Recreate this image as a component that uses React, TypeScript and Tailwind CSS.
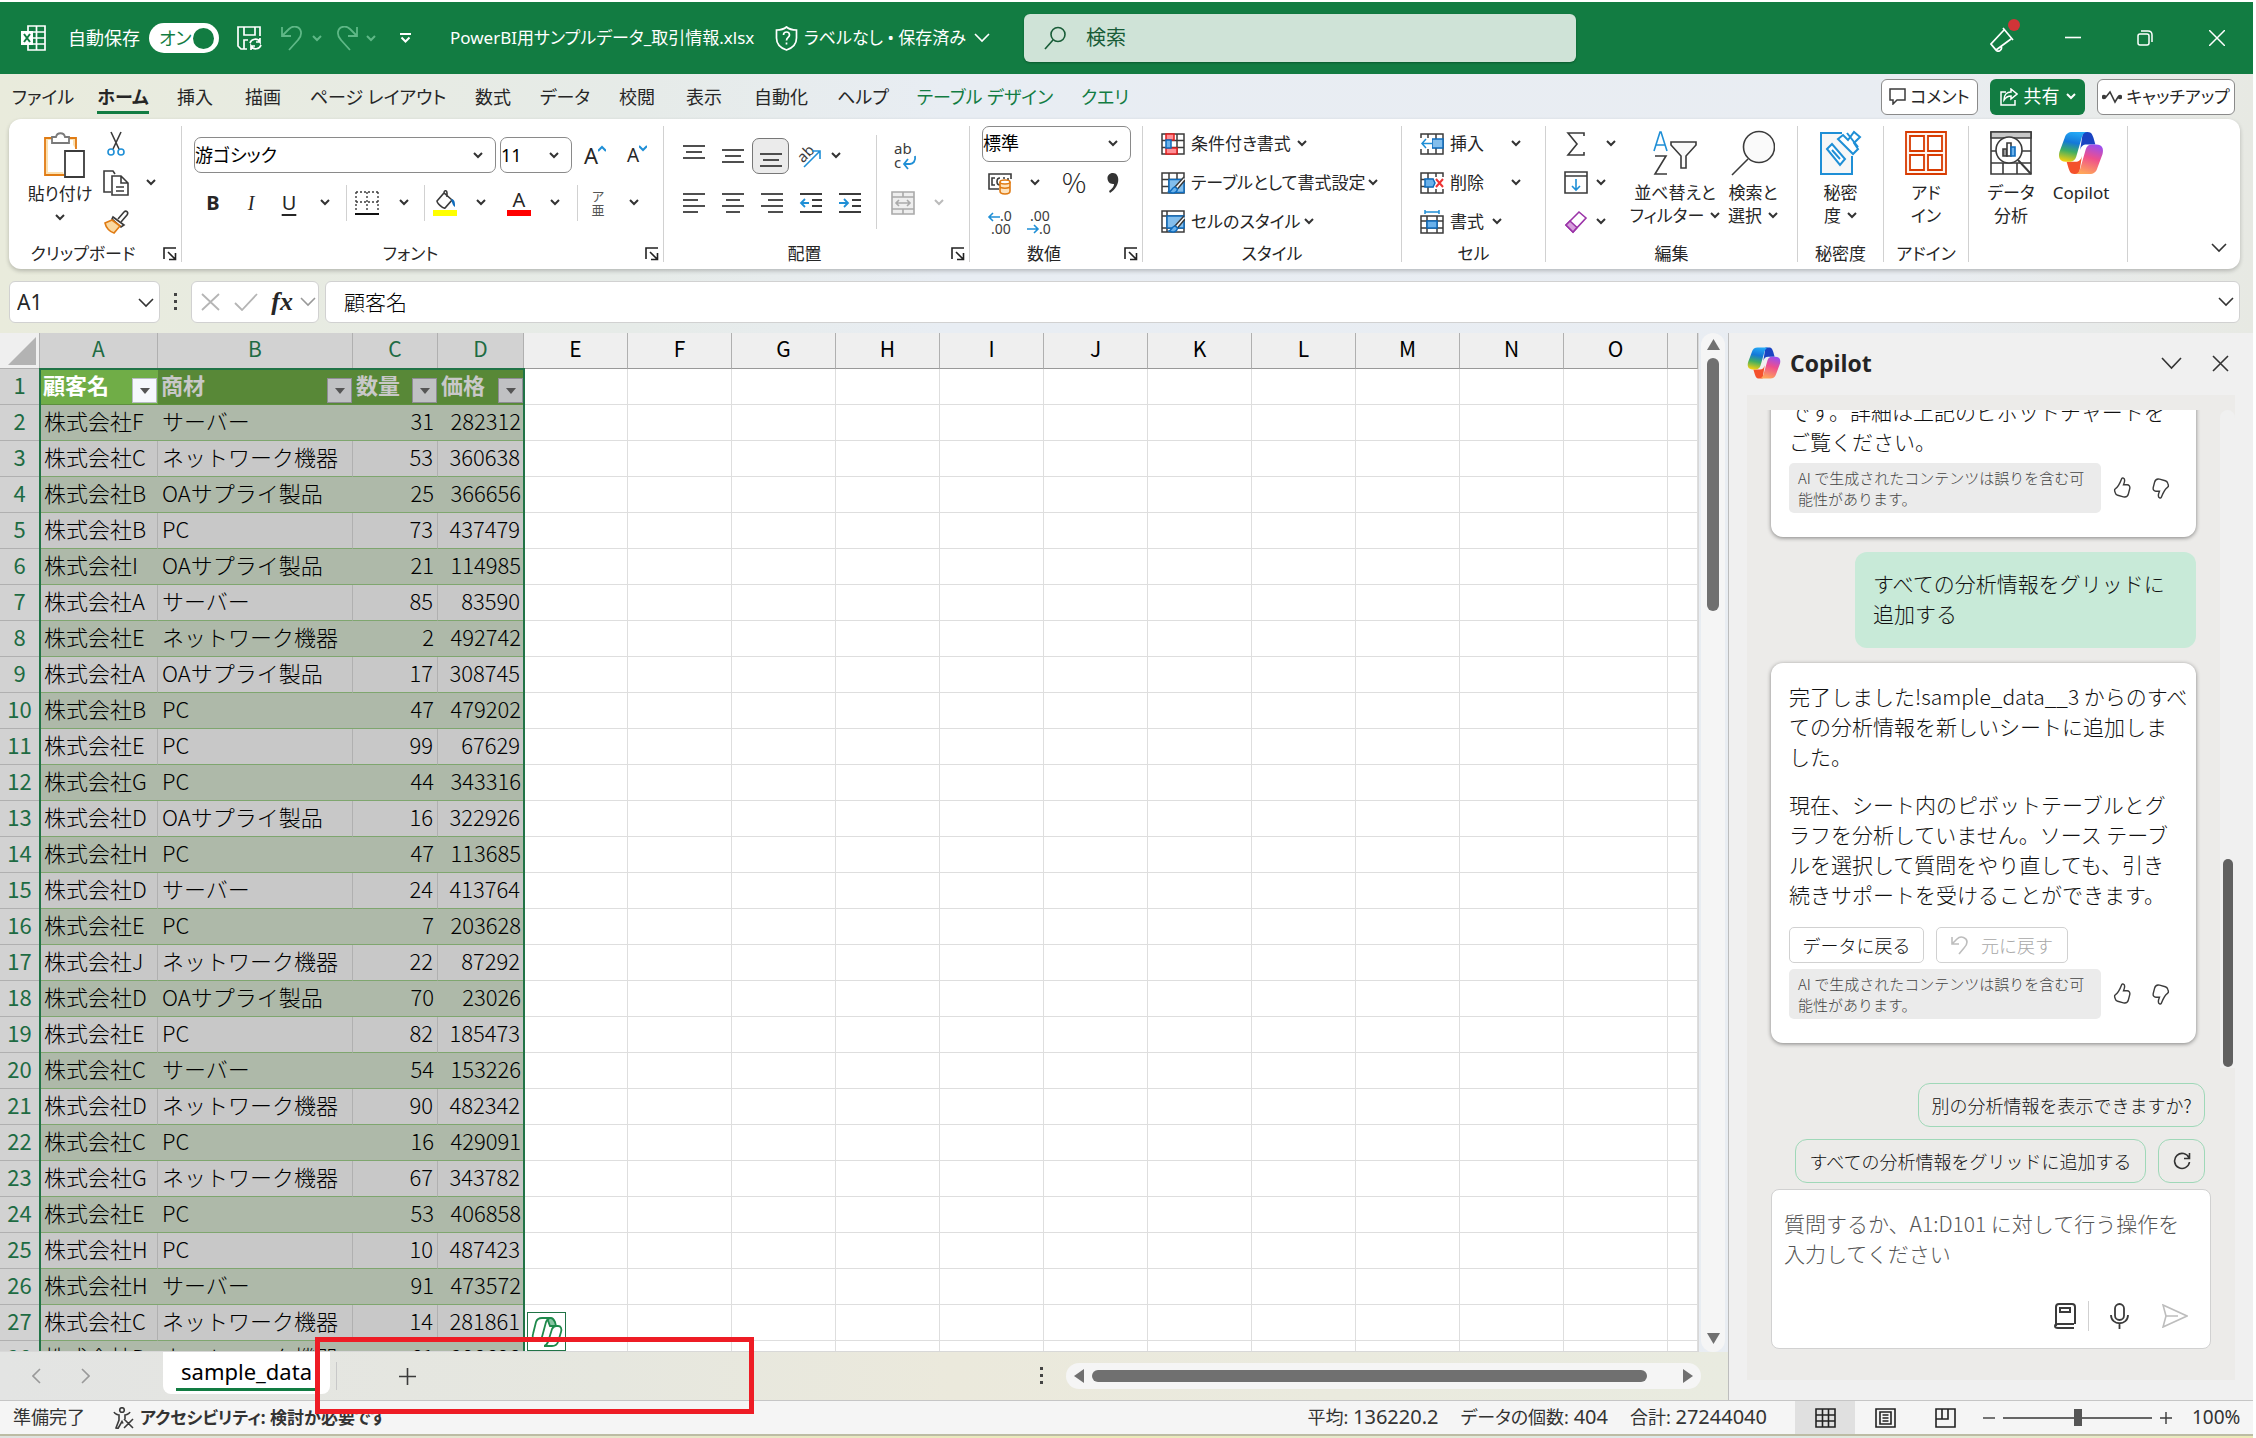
import { useState } from "react";
import type { ReactNode } from "react";

const INK = "#3b3b3b";
const BLUE = "#1f8fd6";

const TABS = [
  { label: "ファイル", width: "w-[86px]" },
  { label: "ホーム", width: "w-[74px]" },
  { label: "挿入", width: "w-[70px]" },
  { label: "描画", width: "w-[66px]" },
  { label: "ページ レイアウト", width: "w-[164px]" },
  { label: "数式", width: "w-[66px]" },
  { label: "データ", width: "w-[78px]" },
  { label: "校閲", width: "w-[66px]" },
  { label: "表示", width: "w-[68px]" },
  { label: "自動化", width: "w-[86px]" },
  { label: "ヘルプ", width: "w-[78px]" },
  { label: "テーブル デザイン", width: "w-[166px]", accent: true },
  { label: "クエリ", width: "w-[74px]", accent: true },
];

const COLUMNS = ["E", "F", "G", "H", "I", "J", "K", "L", "M", "N", "O", ""];

const ROWS: [string, string, number, number][] = [
  ["株式会社F", "サーバー", 31, 282312],
  ["株式会社C", "ネットワーク機器", 53, 360638],
  ["株式会社B", "OAサプライ製品", 25, 366656],
  ["株式会社B", "PC", 73, 437479],
  ["株式会社I", "OAサプライ製品", 21, 114985],
  ["株式会社A", "サーバー", 85, 83590],
  ["株式会社E", "ネットワーク機器", 2, 492742],
  ["株式会社A", "OAサプライ製品", 17, 308745],
  ["株式会社B", "PC", 47, 479202],
  ["株式会社E", "PC", 99, 67629],
  ["株式会社G", "PC", 44, 343316],
  ["株式会社D", "OAサプライ製品", 16, 322926],
  ["株式会社H", "PC", 47, 113685],
  ["株式会社D", "サーバー", 24, 413764],
  ["株式会社E", "PC", 7, 203628],
  ["株式会社J", "ネットワーク機器", 22, 87292],
  ["株式会社D", "OAサプライ製品", 70, 23026],
  ["株式会社E", "PC", 82, 185473],
  ["株式会社C", "サーバー", 54, 153226],
  ["株式会社D", "ネットワーク機器", 90, 482342],
  ["株式会社C", "PC", 16, 429091],
  ["株式会社G", "ネットワーク機器", 67, 343782],
  ["株式会社E", "PC", 53, 406858],
  ["株式会社H", "PC", 10, 487423],
  ["株式会社H", "サーバー", 91, 473572],
  ["株式会社C", "ネットワーク機器", 14, 281861],
  ["株式会社D", "ネットワーク機器", 61, 298698],
];

function Svg({
  w = 24,
  h = 24,
  box,
  children,
  stroke = INK,
  sw = 1.6,
}: {
  w?: number;
  h?: number;
  box?: string;
  children: ReactNode;
  stroke?: string;
  sw?: number;
}) {
  return (
    <svg
      width={w}
      height={h}
      viewBox={box ?? `0 0 ${w} ${h}`}
      fill="none"
      stroke={stroke}
      strokeWidth={sw}
      className="shrink-0"
      aria-hidden="true"
    >
      {children}
    </svg>
  );
}

function Chevron({ color = "#333" }: { color?: string }) {
  return (
    <Svg w={10} h={7} stroke={color} sw={2}>
      <path d="M1 1l4 4 4-4" />
    </Svg>
  );
}

function WideChevron({ color = "#333" }: { color?: string }) {
  return (
    <Svg w={16} h={10} stroke={color} sw={1.6}>
      <path d="M1 1l7 7 7-7" />
    </Svg>
  );
}

function CopilotLogo({ w, h }: { w: number; h: number }) {
  return (
    <Svg w={w} h={h} box="0 0 48 48" stroke="none">
      <defs>
        <linearGradient id="cool" x1="0.5" y1="0" x2="0.3" y2="1">
          <stop offset="0" stopColor="#24a8f5" />
          <stop offset="0.35" stopColor="#1478d8" />
          <stop offset="0.65" stopColor="#3fae63" />
          <stop offset="1" stopColor="#f2cf10" />
        </linearGradient>
        <linearGradient id="warm" x1="0.7" y1="0" x2="0.4" y2="1">
          <stop offset="0" stopColor="#9a4ff0" />
          <stop offset="0.45" stopColor="#ee4f8d" />
          <stop offset="1" stopColor="#ffa65a" />
        </linearGradient>
      </defs>
      <path d="M26 2h5c4 0 5 3 6 6l2 7h-9c-4 0-6 2-7 6z" fill="#1a44c2" />
      <path d="M22 46h-5c-4 0-5-3-6-6l-2-7h9c4 0 6-2 7-6z" fill="#f4512c" />
      <path
        d="M15 2h16c-3 0-5 2-6 5l-6 21c-1 3-3 5-6 5H8c-6 0-8-4-6.500-10L7 8c1-4 4-6 8-6z"
        fill="url(#cool)"
      />
      <path
        d="M33 46H17c3 0 5-2 6-5l6-21c1-3 3-5 6-5h5c6 0 8 4 6.500 10L41 40c-1 4-4 6-8 6z"
        fill="url(#warm)"
      />
    </Svg>
  );
}

function Lines({ rows, y = 4 }: { rows: [number, number][]; y?: number }) {
  return (
    <Svg sw={1.8}>
      {rows.map(([x1, x2], i) => (
        <path key={i} d={`M${x1} ${y + i * 6}H${x2}`} />
      ))}
    </Svg>
  );
}

function GridIcon({ children }: { children?: ReactNode }) {
  return (
    <Svg sw={1.5}>
      <path d="M1 2h22v20H1zM1 8.500h22M1 15.500h22M8 2v20M16 2v20" />
      {children}
    </Svg>
  );
}

function Brush() {
  return (
    <>
      <path d="M23 6l-9 10 2.500 2L24 9" fill="#fff" />
      <path d="M14 16c-3 0-3 4-6 5 4 2 8 1 8.500-3z" fill="#6bb1ea" stroke="#0f6cbd" />
    </>
  );
}

function ThumbIcon({ down }: { down?: boolean }) {
  return (
    <button aria-label={down ? "よくない" : "よい"} className={down ? "rotate-180" : ""}>
      <Svg w={22} h={26} box="0 0 20 22" sw={1.3}>
        <path d="M9.800 2.400c.5-1 2.600-.6 2.600 1.600 0 1.500-.5 2.900-1 4.100h3.200c1.800 0 2.900 1.500 2.500 3.200l-1.300 5.100c-.6 2.200-2.500 3.200-4.500 2.700l-5.200-1.500c-1.100-.3-1.900-1.100-2.200-2.200l-.6-1.800c-.2-.8.1-1.600.8-2 2.700-1.700 3.700-4 5.700-9.200z" />
      </Svg>
    </button>
  );
}

function Tool({
  label,
  width,
  children,
}: {
  label: string;
  width: string;
  children: ReactNode;
}) {
  return (
    <button aria-label={label} className={`flex h-9 items-center justify-center ${width}`}>
      {children}
    </button>
  );
}

function Group({
  label,
  width,
  launcher,
  children,
}: {
  label: string;
  width: string;
  launcher?: boolean;
  children: ReactNode;
}) {
  return (
    <section className={`flex shrink-0 ${width}`}>
      <div className="flex min-w-0 flex-1 flex-col">
        <div className="flex h-[123px] pt-[5px]">{children}</div>
        <div className="flex h-6 items-center">
          <h2 className="flex-1 text-center">{label}</h2>
          {launcher && (
            <button aria-label={`${label}の設定`} className="w-6 pl-[6px]">
              <Svg w={14} h={14} stroke="#222" sw={1.6}>
                <path d="M1 12V1h12M5 5l7 7M12.500 6v6.500H6" />
              </Svg>
            </button>
          )}
        </div>
      </div>
      <div className="my-[7px] w-px bg-[#d1d1d1]" />
    </section>
  );
}

function BigButton({
  icon,
  lines,
  width,
  chevron,
}: {
  icon: ReactNode;
  lines: string[];
  width: string;
  chevron?: boolean;
}) {
  return (
    <button className={`flex flex-col items-center leading-[23px] whitespace-nowrap ${width}`}>
      <span className="flex h-[57px] items-center">{icon}</span>
      {lines.map((line, i) => (
        <span key={line} className="flex h-[23px] items-center gap-[6px]">
          {line}
          {chevron && i === lines.length - 1 && <Chevron />}
        </span>
      ))}
    </button>
  );
}

function RowButton({
  icon,
  label,
  gap = "gap-[6px]",
}: {
  icon: ReactNode;
  label: string;
  gap?: string;
}) {
  return (
    <button className="flex h-[39px] items-center gap-[6px] whitespace-nowrap">
      {icon}
      <span className={`flex items-center ${gap}`}>
        {label}
        <Chevron />
      </span>
    </button>
  );
}

function Select({ label, value, width }: { label: string; value: string; width: string }) {
  return (
    <div className={`relative flex h-9 items-center ${width}`}>
      <select
        aria-label={label}
        className="h-9 w-full appearance-none rounded-[7px] border border-[#8a8a8a] bg-white text-[18px] text-black"
      >
        <option>{value}</option>
      </select>
      <span className="pointer-events-none absolute right-[13px]">
        <Chevron />
      </span>
    </div>
  );
}

function TitleBar() {
  const [autosave, setAutosave] = useState(true);
  return (
    <header className="flex h-[72px] items-center bg-[#127c42] pl-[21px] text-[18px] text-white">
      <Svg w={25} h={26} stroke="#fff" sw={1.7}>
        <path d="M7 6V1h17v24H7v-5M7 7h17M12 13h12M7 19h17M15.500 1v24" />
        <path d="M0 6h12v14H0z" fill="#fff" stroke="none" />
        <path d="M3 9l6 8M9 9l-6 8" stroke="#127c42" strokeWidth={2} />
      </Svg>
      <label className="ml-[22px] flex items-center gap-[9px]">
        自動保存
        <input
          type="checkbox"
          checked={autosave}
          onChange={(e) => setAutosave(e.target.checked)}
          className="sr-only"
        />
        <span className="flex h-[30px] w-[70px] items-center justify-between rounded-full bg-white pr-[5px] pl-[10px] text-[#127c42]">
          オン
          <span className="h-[21px] w-[21px] rounded-full bg-[#127c42]" />
        </span>
      </label>
      <button aria-label="上書き保存" className="ml-[18px]">
        <Svg w={25} h={25} stroke="#fff" sw={1.7}>
          <path d="M10 23H4l-3-3V1h22v9M7 1v8h11V1M7 23v-9h4" />
          <path d="M13 17a5.500 5.500 0 0 1 10-1v-4M24 19a5.500 5.500 0 0 1-10 1v4M23 16h-4M14 20h4" />
        </Svg>
      </button>
      <button aria-label="元に戻す" className="ml-[19px] flex items-center gap-2">
        <Svg w={23} h={25} stroke="#5fb887" sw={1.8}>
          <path d="M1 1v9h9M1 10l7-7c4-4 11-3 12 3 .5 4-1 6-3 8L8 24" />
        </Svg>
        <Chevron color="#5fb887" />
      </button>
      <button aria-label="やり直し" className="ml-[13px] flex items-center gap-2">
        <Svg w={23} h={25} stroke="#5fb887" sw={1.8}>
          <path d="M22 1v9h-9M22 10l-7-7C11-1 4 0 3 6c-.5 4 1 6 3 8l9 10" />
        </Svg>
        <Chevron color="#5fb887" />
      </button>
      <button aria-label="クイック アクセス ツール バーのユーザー設定" className="ml-6">
        <Svg w={11} h={10} stroke="#fff" sw={2}>
          <path d="M0 1h11M1.500 4.500l4 4 4-4" />
        </Svg>
      </button>
      <div className="ml-[39px] flex w-[574px] items-center text-[17px] whitespace-nowrap">
        <span className="w-[325px]">PowerBI用サンプルデータ_取引情報.xlsx</span>
        <Svg w={23} h={25} stroke="#fff" sw={1.7}>
          <path d="M11.500 1c3 2.500 6 3 10 3v8c0 6-4 10-10 12-6-2-10-6-10-12V4c4 0 7-.5 10-3z" />
          <path d="M8.500 9c0-4 6-4 6 0 0 2.500-3 2.500-3 5.500M11.500 16.500v2" />
        </Svg>
        <span className="ml-[6px]">ラベルなし • 保存済み</span>
        <span className="ml-2">
          <WideChevron color="#fff" />
        </span>
      </div>
      <label className="flex h-12 w-[552px] items-center gap-5 rounded-md bg-[#cfe3d7] pl-5 shadow-[0_1px_2px_#0a5a2e]">
        <Svg w={22} h={24} stroke="#185c37" sw={1.6}>
          <circle cx="14" cy="8.500" r="7" />
          <path d="M9 14L1 23" />
        </Svg>
        <input
          type="search"
          placeholder="検索"
          aria-label="検索"
          className="flex-1 bg-transparent text-[20px] placeholder:text-[#185c37]"
        />
      </label>
      <div className="ml-auto flex items-center">
        <button aria-label="新機能" className="relative w-[47px]">
          <Svg w={26} h={28} stroke="#fff" sw={1.7}>
            <path d="M14 6L1 20l5 6L21 15M6 26c2 3 7 0 5-4M13 4l10 12" />
          </Svg>
          <span className="absolute -top-[5px] left-[18px] h-3 w-3 rounded-full bg-[#d13438]" />
        </button>
        <button aria-label="最小化" className="flex w-[72px] justify-center">
          <Svg w={16} h={16} stroke="#fff">
            <path d="M0 7.500h16" />
          </Svg>
        </button>
        <button aria-label="元のサイズに戻す" className="flex w-[72px] justify-center">
          <Svg w={16} h={16} stroke="#fff" sw={1.5}>
            <rect x="1" y="4" width="11" height="11" rx="2" />
            <path d="M4 1h7c2.500 0 4 1.500 4 4v7" />
          </Svg>
        </button>
        <button aria-label="閉じる" className="flex w-[72px] justify-center">
          <Svg w={16} h={16} stroke="#fff" sw={1.5}>
            <path d="M0 0l16 16M16 0L0 16" />
          </Svg>
        </button>
      </div>
    </header>
  );
}

function TabRow() {
  return (
    <nav className="flex h-[45px] items-center text-[18px] whitespace-nowrap text-[#262626]">
      {TABS.map((t) => (
        <button
          key={t.label}
          className={`flex h-9 justify-center ${t.width} ${t.accent ? "text-[#127c42]" : ""}`}
        >
          <span
            className={
              t.label === "ホーム"
                ? "h-[35px] border-b-[3px] border-[#127c42] pt-[6px] leading-6 font-bold"
                : "pt-[6px] leading-6"
            }
          >
            {t.label}
          </span>
        </button>
      ))}
      <div className="mr-[18px] ml-auto flex gap-3">
        <button className="flex h-9 w-[97px] items-center justify-center gap-1 rounded-[6px] border border-[#8a8a8a] bg-white text-[17px]">
          <Svg w={17} h={17} sw={1.5}>
            <path d="M1 1h15v11H8l-4 4v-4H1z" />
          </Svg>
          コメント
        </button>
        <button className="flex h-9 w-[95px] items-center justify-center gap-[6px] rounded-[6px] bg-[#127c42] text-white">
          <Svg w={18} h={18} stroke="#fff" sw={1.5}>
            <path d="M6 4H1v13h14v-5M11 1l6 5-6 5V8c-3 0-5 1-7 4 0-5 3-8 7-8z" />
          </Svg>
          共有
          <Chevron color="#fff" />
        </button>
        <button className="flex h-9 w-[138px] items-center justify-center gap-1 rounded-[6px] border border-[#8a8a8a] bg-white text-[17px]">
          <Svg w={20} h={14} sw={1.6}>
            <path d="M2 7h2l4-5 5 10 3-5h2" />
            <circle cx="2" cy="7" r="1.500" fill={INK} />
            <circle cx="18" cy="7" r="1.500" fill={INK} />
          </Svg>
          キャッチアップ
        </button>
      </div>
    </nav>
  );
}

function Ribbon() {
  return (
    <div className="mr-[13px] ml-[9px] flex h-[150px] rounded-xl bg-white text-[17px] text-[#262626] shadow-[0_2px_4px_rgba(0,0,0,0.22)]">
      <Group label="クリップボード" width="w-[173px]" launcher>
        <button className="ml-[18px] flex w-[66px] flex-col items-center pt-2 leading-6">
          <span className="pl-[10px]">
            <Svg w={42} h={46} sw={1.8}>
              <path d="M8 6H1v37h19M24 6h8v11" stroke="#e07b13" fill="#fbe0b0" />
              <path d="M4 8h25v10H20v22H4z" fill="#fff" stroke="none" />
              <path d="M8 11V5h4c1-5 8-5 9 0h4v6z" fill="#fff" stroke="#7a7a7a" />
              <path d="M21 19h19v26H21z" fill="#fff" />
            </Svg>
          </span>
          <span className="mt-1 mb-2">貼り付け</span>
          <Chevron />
        </button>
        <div className="flex w-[46px] flex-col">
          <Tool label="切り取り" width="mt-[2px] w-[46px]">
            <Svg w={18} h={26}>
              <path d="M4 1l8 17M14 1L6 18" />
              <g stroke={BLUE}>
                <circle cx="4" cy="21" r="3" />
                <circle cx="14" cy="21" r="3" />
              </g>
            </Svg>
          </Tool>
          <Tool label="コピー" width="mt-[3px] w-[46px]">
            <Svg w={26} h={26}>
              <path d="M8 22H1V1h9l2 3M9 6h9l7 7v12H9zM18 6v7h7M13 17h8M13 21h8" />
            </Svg>
          </Tool>
          <Tool label="書式のコピー" width="mt-[3px] w-[46px]">
            <Svg w={25} h={24}>
              <path d="M14 9l6-7c2-2 5 0 3 3l-6 7" />
              <path d="M9 7l11 8-3 2L8 9z" fill="#fff" />
              <path d="M8 10L1 13c1 5 5 9 9 10l6-7z" fill="#fbd9a0" stroke="#e07b13" />
            </Svg>
          </Tool>
        </div>
        <button aria-label="コピーのオプション" className="flex h-[117px] w-6 items-center justify-center">
          <Chevron />
        </button>
      </Group>

      <Group label="フォント" width="w-[482px]" launcher>
        <div className="flex flex-col pt-2 pl-3">
          <div className="flex h-[47px] items-start gap-1 pt-[5px]">
            <Select label="フォント名" value="游ゴシック" width="w-[302px]" />
            <Select label="フォント サイズ" value="11" width="w-[72px]" />
            <Tool label="拡大" width="w-[38px]">
              <span className="text-[22px]">A</span>
              <Svg w={8} h={20} stroke={BLUE} sw={2}>
                <path d="M0 6l4-4 4 4" />
              </Svg>
            </Tool>
            <Tool label="縮小" width="w-[38px]">
              <span className="text-[19px]">A</span>
              <Svg w={8} h={20} stroke={BLUE} sw={2}>
                <path d="M0 1l4 4 4-4" />
              </Svg>
            </Tool>
          </div>
          <div className="flex h-[47px] items-center text-[20px]">
            <Tool label="太字" width="w-[38px] font-bold">
              B
            </Tool>
            <Tool label="斜体" width="w-[38px] font-['Liberation_Serif',serif] italic">
              I
            </Tool>
            <Tool label="下線" width="w-[38px] underline underline-offset-4">
              U
            </Tool>
            <Tool label="下線の種類" width="w-[34px]">
              <Chevron />
            </Tool>
            <i className="ml-1 h-9 w-px bg-[#d1d1d1]" />
            <Tool label="罫線" width="w-[40px]">
              <Svg w={24} h={24}>
                <path d="M1 1h22M1 1v20M23 1v20M12 1v20M1 11h22" strokeDasharray="2 2" strokeWidth={1.4} />
                <path d="M0 23h24" stroke="#111" strokeWidth={2} />
              </Svg>
            </Tool>
            <Tool label="罫線の種類" width="w-[34px]">
              <Chevron />
            </Tool>
            <i className="ml-[3px] h-9 w-px bg-[#d1d1d1]" />
            <Tool label="塗りつぶしの色" width="w-[40px]">
              <Svg w={24} h={26}>
                <path d="M4 11l7-8 8 7-7 8c-2 1-8-5-8-7zM11 3c0-3 3-3 3 0v4" />
                <path d="M18 9c4 0 4 4 4 8-2-1-3-4-4-8z" fill="#0f6cbd" stroke="none" />
                <path d="M0 20h24v6H0z" fill="#ffff00" stroke="none" />
              </Svg>
            </Tool>
            <Tool label="塗りつぶしの色を選択" width="w-[32px]">
              <Chevron />
            </Tool>
            <Tool label="フォントの色" width="w-[44px] flex-col">
              <span className="text-[20px] leading-5">A</span>
              <span className="h-[6px] w-6 bg-[#ff0000]" />
            </Tool>
            <Tool label="フォントの色を選択" width="w-[28px]">
              <Chevron />
            </Tool>
            <i className="ml-2 h-9 w-px bg-[#d1d1d1]" />
            <Tool
              label="ふりがな"
              width="w-[40px] flex-col font-['Noto_Sans_CJK_JP',sans-serif] text-[13px] leading-[14px] text-[#555]"
            >
              <span>ア</span>
              <span>亜</span>
            </Tool>
            <Tool label="ふりがなの設定" width="w-[32px]">
              <Chevron />
            </Tool>
          </div>
        </div>
      </Group>

      <Group label="配置" width="w-[306px]" launcher>
        <div className="flex flex-col pt-2 pl-[10px]">
          <div className="flex h-[47px] items-center">
            <Tool label="上揃え" width="w-[39px]">
              <Lines rows={[[1, 23], [4, 20], [1, 23]]} y={2} />
            </Tool>
            <Tool label="上下中央揃え" width="w-[39px]">
              <Lines rows={[[1, 23], [4, 20], [1, 23]]} y={6} />
            </Tool>
            <Tool label="下揃え" width="w-[37px] rounded-[7px] border border-[#777] bg-[#ebebeb]">
              <Lines rows={[[1, 23], [4, 20], [1, 23]]} y={10} />
            </Tool>
            <Tool label="方向" width="w-[39px]">
              <Svg w={26} h={26}>
                <text
                  x="1"
                  y="18"
                  transform="rotate(-45 7 12)"
                  fontSize="15"
                  fill={INK}
                  stroke="none"
                >
                  ab
                </text>
                <path d="M8 24L24 8M16 8h8v8" stroke={BLUE} />
              </Svg>
            </Tool>
            <Tool label="方向の種類" width="w-4">
              <Chevron />
            </Tool>
          </div>
          <div className="flex h-[47px] items-center">
            <Tool label="左揃え" width="w-[39px]">
              <Lines rows={[[1, 23], [1, 16], [1, 23], [1, 16]]} y={3} />
            </Tool>
            <Tool label="中央揃え" width="w-[39px]">
              <Lines rows={[[1, 23], [5, 19], [1, 23], [5, 19]]} y={3} />
            </Tool>
            <Tool label="右揃え" width="w-[39px]">
              <Lines rows={[[1, 23], [8, 23], [1, 23], [8, 23]]} y={3} />
            </Tool>
            <Tool label="インデントを減らす" width="w-[39px]">
              <Svg sw={1.8}>
                <path d="M1 3h22M13 9h10M13 15h10M1 21h22" />
                <path d="M10 12H2M6 8l-4 4 4 4" stroke={BLUE} />
              </Svg>
            </Tool>
            <Tool label="インデントを増やす" width="w-[39px]">
              <Svg sw={1.8}>
                <path d="M1 3h22M14 9h9M14 15h9M1 21h22" />
                <path d="M1 12h8M6 8l4 4-4 4" stroke={BLUE} />
              </Svg>
            </Tool>
          </div>
        </div>
        <i className="mt-[11px] ml-[7px] h-[94px] w-px bg-[#d1d1d1]" />
        <div className="flex flex-col pt-2">
          <div className="flex h-[47px] items-center">
            <Tool label="折り返して全体を表示する" width="w-[56px]">
              <Svg w={24} h={28}>
                <text x="1" y="12" fontSize="15" fill={INK} stroke="none">
                  ab
                </text>
                <text x="1" y="26" fontSize="15" fill={INK} stroke="none">
                  c
                </text>
                <path d="M22 14c1 5-2 8-5 8h-6M15 17l-4 5 4 5" stroke={BLUE} strokeWidth={1.8} />
              </Svg>
            </Tool>
          </div>
          <div className="flex h-[47px] items-center">
            <Tool label="セルを結合して中央揃え" width="w-[52px]">
              <Svg stroke="#a9a9a9">
                <path d="M1 1h22v22H1z" fill="#eee" />
                <path d="M1 6h22M1 18h22M12 1v5M12 18v5M5 12h14M8 9l-3 3 3 3M16 9l3 3-3 3" />
              </Svg>
            </Tool>
            <Tool label="結合の種類" width="w-5">
              <Chevron color="#bbb" />
            </Tool>
          </div>
        </div>
      </Group>

      <Group label="数値" width="w-[173px]" launcher>
        <div className="flex flex-col pl-3">
          <div className="flex h-[39px] items-center">
            <Select label="表示形式" value="標準" width="w-[149px]" />
          </div>
          <div className="flex h-[39px] items-center">
            <Tool label="通貨表示形式" width="w-9">
              <Svg w={26} h={24}>
                <path d="M12 18H2V3h22v5M8 7H5v7h3M13 14c-4 0-4-7 0-7M16 7h2M21 7v2" />
                <path
                  d="M13 11v9c0 4 10 4 10 0v-9M13 15c0 3 10 3 10 0"
                  fill="#fde3bf"
                  stroke="#e07b13"
                />
                <ellipse cx="18" cy="11" rx="5" ry="2" fill="#fff" stroke="#e07b13" />
              </Svg>
            </Tool>
            <Tool label="通貨の種類" width="w-[34px]">
              <Chevron />
            </Tool>
            <Tool
              label="パーセント スタイル"
              width="w-[44px] font-['Noto_Sans_CJK_JP',sans-serif] text-[27px] font-light"
            >
              %
            </Tool>
            <Tool label="桁区切りスタイル" width="w-[34px]">
              <Svg w={12} h={20} stroke="none">
                <path d="M6 0c7 0 8 13-3 20l-1-2c4-3 5-5 5-7-8 1-9-11-1-11z" fill="#333" />
              </Svg>
            </Tool>
          </div>
          <div className="flex h-[39px] items-center">
            <Tool label="小数点以下の表示桁数を増やす" width="w-9">
              <Svg w={26} h={26}>
                <path d="M13 8H2M6 4L2 8l4 4" stroke={BLUE} />
                <text x="13" y="12" fontSize="14" fill={INK} stroke="none">.0</text>
                <text x="4" y="25" fontSize="14" fill={INK} stroke="none">.00</text>
              </Svg>
            </Tool>
            <Tool label="小数点以下の表示桁数を減らす" width="w-[42px]">
              <Svg w={26} h={26}>
                <text x="4" y="12" fontSize="14" fill={INK} stroke="none">.00</text>
                <text x="13" y="25" fontSize="14" fill={INK} stroke="none">.0</text>
                <path d="M1 20h11M8 16l4 4-4 4" stroke={BLUE} />
              </Svg>
            </Tool>
          </div>
        </div>
      </Group>

      <Group label="スタイル" width="w-[259px]">
        <div className="flex flex-col pl-[18px]">
          <RowButton
            label="条件付き書式"
            icon={
              <GridIcon>
                <path d="M5 2h8v6H5zM5 16h11v6H5z" fill="#ff8f95" stroke="#e02020" />
                <path d="M5 8h5v8H5z" fill="#6bb1ea" stroke="#0f6cbd" />
              </GridIcon>
            }
          />
          <RowButton
            label="テーブルとして書式設定"
            gap="gap-[3px]"
            icon={
              <GridIcon>
                <path d="M8 8.500h15v13H8z" fill="#83beec" stroke="#0f6cbd" />
                <Brush />
              </GridIcon>
            }
          />
          <RowButton
            label="セルのスタイル"
            gap="gap-[3px]"
            icon={
              <Svg sw={1.5}>
                <path d="M1 1h22v21H1zM1 6h22M6 1v21M1 18h22" />
                <path d="M6 6h17v12H6z" fill="#83beec" stroke="#0f6cbd" />
                <Brush />
              </Svg>
            }
          />
        </div>
      </Group>

      <Group label="セル" width="w-[144px]">
        <div className="flex flex-col pl-[18px]">
          <RowButton
            label="挿入"
            gap="gap-[27px]"
            icon={
              <GridIcon>
                <path d="M12 7h11v9H12z" fill="#83beec" stroke="#0f6cbd" />
                <path d="M0 6h12v11H0z" fill="#fff" stroke="none" />
                <path d="M12 11.500H2M6 7l-4 4.500L6 16" stroke={BLUE} />
              </GridIcon>
            }
          />
          <RowButton
            label="削除"
            gap="gap-[27px]"
            icon={
              <GridIcon>
                <path d="M14 6h10v12H14z" fill="#fff" stroke="none" />
                <path d="M5 8h8l2 4-2 4H5z" fill="#6bb1ea" stroke="#0f6cbd" />
                <path d="M16 8l7 8M23 8l-7 8" stroke="#e33" strokeWidth={2} />
              </GridIcon>
            }
          />
          <RowButton
            label="書式"
            gap="gap-2"
            icon={
              <Svg sw={1.5}>
                <path d="M1 6h22v17H1zM1 11h22M1 18h22M7 6v17M17 6v17" />
                <path d="M7 11h10v7H7z" fill="#6bb1ea" stroke="#0f6cbd" />
                <path d="M5 2h14M5 0v4M19 0v4" stroke={BLUE} />
              </Svg>
            }
          />
        </div>
      </Group>

      <Group label="編集" width="w-[252px]">
        <div className="flex w-[86px] shrink-0 flex-col pl-[18px]">
          <div className="flex h-[39px] items-center gap-[18px]">
            <Svg>
              <path d="M20 4V1H4l9 11L4 23h16v-3" />
            </Svg>
            <Chevron />
          </div>
          <div className="flex h-[39px] items-center gap-2">
            <Svg>
              <path d="M1 1h22v21H1zM1 5h22" />
              <path d="M12 8v11M8 15l4 4 4-4" stroke={BLUE} />
            </Svg>
            <Chevron />
          </div>
          <div className="flex h-[39px] items-center gap-2">
            <Svg stroke="#9b34a8">
              <path d="M2 15l13-13 7 6L9 22z" fill="#fff" />
              <path d="M2 15l4-4 7 6.500L9 22z" fill="#d6a0dc" />
            </Svg>
            <Chevron />
          </div>
        </div>
        <BigButton
          width="w-[86px]"
          lines={["並べ替えと", "フィルター"]}
          chevron
          icon={
            <Svg w={44} h={44}>
              <path d="M1 20L7 1h1l6 19M3 14h9" stroke={BLUE} />
              <path d="M2 25h11L2 43h12" />
              <path d="M18 11h25v3L33 25v12h-5V25L18 14z" fill="#fafafa" />
            </Svg>
          }
        />
        <BigButton
          width="w-[70px]"
          lines={["検索と", "選択"]}
          chevron
          icon={
            <Svg w={44} h={46}>
              <circle cx="28" cy="17" r="15.500" fill="#fafafa" />
              <path d="M17 29L1 45" />
            </Svg>
          }
        />
      </Group>

      <Group label="秘密度" width="w-[86px]">
        <BigButton
          width="w-full"
          lines={["秘密", "度"]}
          chevron
          icon={
            <Svg w={42} h={46} stroke={BLUE} sw={2}>
              <path d="M22 3H1v41h31V26" fill="#f7f7f7" />
              <path d="M7 19l5-5 13 15-5 6zM12 20l8 9" fill="#fff" />
              <path d="M18 9l5-4 5 5 6-8 6 5-6 6 4 6-5 5z" fill="#fff" />
              <path d="M27 3l11 14" />
            </Svg>
          }
        />
      </Group>
      <Group label="アドイン" width="w-[85px]">
        <BigButton
          width="w-full"
          lines={["アド", "イン"]}
          icon={
            <Svg w={42} h={44} stroke="#d83b01" sw={1.8}>
              <path d="M1 1h40v42H1z" fill="#fff5ef" />
              <path d="M5 5h14v15H5zM23 5h14v15H23zM5 24h14v15H5zM23 24h14v15H23z" fill="#fff" />
            </Svg>
          }
        />
      </Group>
      <Group label="" width="w-[159px]">
        <BigButton
          width="ml-1 w-[76px]"
          lines={["データ", "分析"]}
          icon={
            <Svg w={42} h={44}>
              <path d="M1 1h40v42H1z" />
              <path d="M1 1h40v6H1z" fill="#c8c8c8" />
              <path d="M1 20h40M1 32h40M13 32v11M27 32v11" />
              <circle cx="19" cy="19" r="13" fill="#fff" />
              <path d="M28 29l13 14" strokeWidth={2} />
              <path d="M13 18h4v7h-4z" fill="#999" />
              <path d="M17 12h4v13h-4z" fill="#fff" />
              <path d="M21 16h4v9h-4z" fill="#6bb1ea" stroke="#0f6cbd" />
            </Svg>
          }
        />
        <BigButton width="w-[64px]" lines={["Copilot"]} icon={<CopilotLogo w={46} h={46} />} />
      </Group>
      <button aria-label="リボンを折りたたむ" className="mt-auto mr-[13px] mb-4 ml-auto">
        <WideChevron />
      </button>
    </div>
  );
}

function FormulaBar() {
  return (
    <div className="mt-3 mr-[13px] mb-[10px] ml-[9px] flex h-[42px] items-stretch text-[21px] text-[#262626]">
      <label className="flex w-[151px] items-center rounded-md border border-[#d1d1d1] bg-white pt-[2px] pr-[5px] pl-[7px]">
        <input aria-label="名前ボックス" defaultValue="A1" className="w-full min-w-0 outline-none" />
        <WideChevron />
      </label>
      <div className="flex w-[31px] items-center justify-center">
        <Svg w={4} h={18} stroke="none">
          <path d="M0 0h3v3H0zM0 7h3v3H0zM0 14h3v3H0z" fill="#444" />
        </Svg>
      </div>
      <div className="flex w-[128px] items-center rounded-md border border-[#d1d1d1] bg-white pr-[2px] pl-[9px]">
        <button aria-label="キャンセル">
          <Svg w={19} h={18} stroke="#b5b5b5" sw={1.8}>
            <path d="M1 1l17 16M18 1L1 17" />
          </Svg>
        </button>
        <button aria-label="入力" className="ml-[14px]">
          <Svg w={24} h={18} stroke="#b5b5b5" sw={1.8}>
            <path d="M1 10l7 7L23 1" />
          </Svg>
        </button>
        <button
          aria-label="関数の挿入"
          className="ml-auto font-['Liberation_Serif',serif] text-[26px] leading-8 font-bold italic"
        >
          fx
        </button>
        <span className="ml-[7px]">
          <WideChevron color="#999" />
        </span>
      </div>
      <label className="ml-[6px] flex flex-1 items-center rounded-md border border-[#d1d1d1] bg-white pr-[5px] pl-[18px]">
        <input
          aria-label="数式バー"
          defaultValue="顧客名"
          className="w-full font-['Noto_Sans_CJK_JP',sans-serif] font-light text-black outline-none [font-feature-settings:normal]"
        />
        <WideChevron />
      </label>
    </div>
  );
}

function HeaderCell({ text, active }: { text: string; active?: boolean }) {
  return (
    <th
      className={`border-b border-[#5c8f3d] p-0 text-left font-bold ${
        active ? "bg-[#70ad47] text-white" : "bg-[#588837] text-[#c8c8c8]"
      }`}
    >
      <div className="flex h-[35px] items-start justify-between pr-px pl-[3px] leading-[30px]">
        {text}
        <button
          aria-label={`${text}のフィルター`}
          className={`mt-[9px] flex h-[25px] w-[25px] items-center justify-center border ${
            active ? "border-[#b8bcc4] bg-[#f6f8fc]" : "border-[#8f8c96] bg-[#c0c1c3]"
          }`}
        >
          <Svg w={10} h={6} stroke="none">
            <path d="M0 0h10L5 6z" fill="#555" />
          </Svg>
        </button>
      </div>
    </th>
  );
}

function Sheet() {
  const cell = "border-r border-b border-[#dedede] p-0";
  const rowHead =
    "border-r border-b border-[#b0b0b0] bg-[#d2d2d2] p-0 align-top font-normal text-[#1e6b43]";
  return (
    <div className="relative min-h-0 flex-1 overflow-hidden border-r border-b border-[#d8d8d8] bg-white">
      <table className="w-full table-fixed border-separate border-spacing-0 font-['Noto_Sans_CJK_JP',sans-serif] text-[22px] leading-[30px] font-light whitespace-nowrap text-black">
        <colgroup>
          <col className="w-10" />
          <col className="w-[118px]" />
          <col className="w-[195px]" />
          <col className="w-[85px]" />
          <col className="w-[86px]" />
          {COLUMNS.map((c) => (
            <col key={c} className={c ? "w-[104px]" : ""} />
          ))}
        </colgroup>
        <thead>
          <tr className="h-9 text-[21px]">
            <th className="border-r border-b border-[#b0b0b0] bg-[#efefef] p-0">
              <div className="flex justify-end pr-[3px]">
                <Svg w={28} h={28} stroke="none">
                  <path d="M28 0v28H0z" fill="#b3b3b3" />
                </Svg>
              </div>
            </th>
            {["A", "B", "C", "D"].map((c) => (
              <th
                key={c}
                className="border-r border-b border-[#b0b0b0] bg-[#d2d2d2] p-0 align-top font-normal text-[#1e6b43]"
              >
                {c}
              </th>
            ))}
            {COLUMNS.map((c) => (
              <th
                key={c}
                className="border-r border-b border-r-[#b0b0b0] border-b-[#999] bg-[#efefef] p-0 align-top font-normal"
              >
                {c}
              </th>
            ))}
          </tr>
        </thead>
        <tbody>
          <tr className="h-9">
            <th className={rowHead}>1</th>
            <HeaderCell text="顧客名" active />
            <HeaderCell text="商材" />
            <HeaderCell text="数量" />
            <HeaderCell text="価格" />
            {COLUMNS.map((c) => (
              <td key={c} className={cell} />
            ))}
          </tr>
          {ROWS.map(([name, item, qty, price], i) => {
            const data =
              i % 2 === 0
                ? "border-b border-b-[#7fa66f] bg-[#aeb9a9]"
                : "border-r border-b border-r-[#b0b0b0] border-b-[#7fa66f] bg-[#c8c8c8]";
            return (
              <tr key={i} className="h-9">
                <th className={rowHead}>{i + 2}</th>
                <td className={`py-0 pl-1 align-top ${data}`}>{name}</td>
                <td className={`py-0 pl-1 align-top ${data}`}>{item}</td>
                <td className={`py-0 pr-1 text-right align-top ${data}`}>{qty}</td>
                <td className={`py-0 pr-[3px] text-right align-top ${data}`}>{price}</td>
                {COLUMNS.map((c) => (
                  <td key={c} className={cell} />
                ))}
              </tr>
            );
          })}
        </tbody>
      </table>
      {/* selection outline */}
      <div className="pointer-events-none absolute top-[35px] -bottom-1 left-[39px] w-[486px] border-2 border-[#217346]" />
      <button
        aria-label="Copilot"
        className="absolute bottom-0 left-[527px] flex h-[39px] w-[39px] items-center justify-center border border-[#217346] bg-white"
      >
        <Svg w={32} h={30} stroke="#1f8a4c" sw={1.8}>
          <path d="M16 1h4c2 0 3 2 4 4l1 4h-6z" fill="#86c5a1" />
          <path d="M11 1h8c-2 0-3 2-4 4l-4 15c-1 2-2 3-4 3H5c-3 0-4-3-3-6L5 5c1-3 3-4 6-4z" fill="#fff" />
          <path d="M21 29h-8c2 0 3-2 4-4l4-13c1-2 2-3 4-3h2c3 0 4 3 3 6l-3 10c-1 3-3 4-6 4z" fill="#fff" />
        </Svg>
      </button>
    </div>
  );
}

function SheetArea() {
  return (
    <div className="relative flex min-w-0 flex-1 flex-col">
      <div className="flex min-h-0 flex-1 pr-[3px]">
        <Sheet />
        <div className="ml-[2px] flex w-6 flex-col items-center rounded-full bg-[#f5f5f5] pt-[6px] pb-2">
          <Svg w={13} h={11} stroke="none">
            <path d="M6.500 0L13 11H0z" fill="#707070" />
          </Svg>
          <div className="mt-2 h-[253px] w-3 rounded-full bg-[#707070]" />
          <span className="mt-auto rotate-180">
            <Svg w={13} h={11} stroke="none">
              <path d="M6.500 0L13 11H0z" fill="#707070" />
            </Svg>
          </span>
        </div>
      </div>
      <div className="flex h-12 items-center bg-[linear-gradient(to_right,#e3e4e3,#e6e7df_35%,#ebe9dc_55%,#e9ebe0)]">
        <button aria-label="前のシート" className="ml-8">
          <Svg w={9} h={16} stroke="#999">
            <path d="M8 1L1 8l7 7" />
          </Svg>
        </button>
        <button aria-label="次のシート" className="ml-10">
          <Svg w={9} h={16} stroke="#999">
            <path d="M1 1l7 7-7 7" />
          </Svg>
        </button>
        <button className="ml-[73px] flex h-[42px] w-[167px] justify-center self-start rounded-b-lg bg-white text-[22px] leading-[38px]">
          <span className="h-[39px] w-[142px] border-b-[3px] border-[#127c42]">sample_data</span>
        </button>
        <i className="ml-[6px] h-7 w-px bg-[#c8c8c8]" />
        <button aria-label="新しいシート" className="ml-[62px]">
          <Svg w={17} h={17}>
            <path d="M8.500 0v17M0 8.500h17" />
          </Svg>
        </button>
        <div className="mr-[27px] ml-auto flex items-center gap-[22px]">
          <Svg w={4} h={18} stroke="none">
            <path d="M0 0h3v3H0zM0 7h3v3H0zM0 14h3v3H0z" fill="#444" />
          </Svg>
          <div className="flex h-[26px] w-[635px] items-center rounded-full bg-[#f5f5f5] px-2">
            <Svg w={10} h={14} stroke="none">
              <path d="M10 0v14L0 7z" fill="#707070" />
            </Svg>
            <div className="mr-9 ml-2 h-3 flex-1 rounded-full bg-[#707070]" />
            <Svg w={10} h={14} stroke="none">
              <path d="M0 0v14l10-7z" fill="#707070" />
            </Svg>
          </div>
        </div>
      </div>
      {/* red callout frame */}
      <div className="pointer-events-none absolute -bottom-[14px] left-[315px] z-10 h-[77px] w-[439px] border-[5px] border-[#ee1c25]" />
    </div>
  );
}

function Disclaimer() {
  return (
    <div className="flex items-center">
      <p className="w-[312px] rounded-[5px] bg-[#ebebeb] px-[9px] py-1 text-[15px] leading-[21px] text-[#444]">
        AI で生成されたコンテンツは誤りを含む可
        <br />
        能性があります。
      </p>
      <div className="ml-[10px] flex gap-[17px]">
        <ThumbIcon />
        <ThumbIcon down />
      </div>
    </div>
  );
}

function CopilotPane() {
  const card = "bg-white px-[18px] shadow-[0_1px_4px_rgba(0,0,0,0.45)]";
  const chip = "flex h-11 items-center justify-center rounded-xl border border-[#9fd8b8]";
  return (
    <aside className="flex w-[525px] shrink-0 flex-col border-l border-[#bdbdbd] bg-[#f0f0f0] font-['Noto_Sans_CJK_JP',sans-serif] font-light whitespace-nowrap text-[#111]">
      <div className="flex h-[62px] items-center pb-[2px] pl-[18px]">
        <CopilotLogo w={34} h={34} />
        <h2 className="ml-[9px] font-['Open_Sans',sans-serif] text-[23px] font-bold text-[#242424]">
          Copilot
        </h2>
        <button aria-label="オプション" className="ml-auto">
          <Svg w={21} h={13} stroke="#333">
            <path d="M1 1l9.500 10L20 1" />
          </Svg>
        </button>
        <button aria-label="閉じる" className="mr-6 ml-[30px]">
          <Svg w={17} h={17} stroke="#333">
            <path d="M1 1l15 15M16 1L1 16" />
          </Svg>
        </button>
      </div>
      <div className="mr-[18px] mb-5 ml-[18px] flex min-h-0 flex-1 flex-col bg-[#ecebe9] pt-[15px]">
        <div className="flex min-h-0 flex-1">
          <div className="flex min-w-0 flex-1 flex-col overflow-hidden pr-6 pl-6 text-[21px] leading-[30px]">
            <div className={`-mt-[14px] rounded-b-xl pb-6 ${card}`}>
              <p className="mb-[7px]">
                です。詳細は上記のピボットチャートを
                <br />
                ご覧ください。
              </p>
              <Disclaimer />
            </div>
            <div className="mt-[15px] w-[341px] self-end rounded-xl bg-[#c8ead8] pt-4 pb-5 pl-[18px]">
              すべての分析情報をグリッドに
              <br />
              追加する
            </div>
            <div className={`mt-[15px] rounded-xl pt-[18px] pb-6 ${card}`}>
              <p>
                完了しました!sample_data__3 からのすべ
                <br />
                ての分析情報を新しいシートに追加しま
                <br />
                した。
              </p>
              <p className="mt-[18px]">
                現在、シート内のピボットテーブルとグ
                <br />
                ラフを分析していません。ソース テーブ
                <br />
                ルを選択して質問をやり直しても、引き
                <br />
                続きサポートを受けることができます。
              </p>
              <div className="mt-[18px] mb-[6px] flex gap-3 text-[18px]">
                <button className="h-9 w-[135px] rounded-[5px] border border-[#d1d1d1]">
                  データに戻る
                </button>
                <button
                  disabled
                  className="flex h-9 w-[132px] items-center justify-center gap-3 rounded-[5px] border border-[#d1d1d1] text-[#a8a8a8]"
                >
                  <Svg w={18} h={19} stroke="#bdbdbd" sw={1.6}>
                    <path d="M1 1v7h7M1 8l5-5c4-4 10-1 10 3 0 3-1 4-3 6l-5 6" />
                  </Svg>
                  元に戻す
                </button>
              </div>
              <Disclaimer />
            </div>
          </div>
          <div className="flex w-[15px] flex-col items-center rounded-t-full bg-[#f0f0f0] pt-[449px]">
            <div className="h-[208px] w-[10px] rounded-full bg-[#616161]" />
          </div>
        </div>
        <div className="mt-[15px] mr-[30px] flex flex-col items-end gap-3 text-[18px]">
          <button className={`w-[287px] ${chip}`}>別の分析情報を表示できますか?</button>
          <div className="flex gap-3">
            <button className={`w-[351px] ${chip}`}>すべての分析情報をグリッドに追加する</button>
            <button aria-label="更新" className={`w-[47px] ${chip}`}>
              <Svg w={18} h={18} stroke="#333">
                <path d="M16 6a7.500 7.500 0 1 0 .5 4M16.500 1v5.500H11" />
              </Svg>
            </button>
          </div>
        </div>
        <div className="mt-[6px] mr-6 mb-[31px] ml-6 flex h-[160px] flex-col rounded-lg border border-[#d1d1d1] bg-white">
          <textarea
            aria-label="Copilot への質問"
            placeholder={"質問するか、A1:D101 に対して行う操作を\n入力してください"}
            className="mt-[18px] ml-3 flex-1 resize-none overflow-hidden text-[21px] leading-[30px] whitespace-pre outline-none placeholder:text-[#555]"
          />
          <div className="mb-[17px] flex h-[31px] items-center justify-end pr-[22px]">
            <button aria-label="プロンプトを表示">
              <Svg w={22} h={26} sw={2}>
                <path d="M20 21H4c-4 0-4 4 0 4h16M2 23V4c0-2 1-3 3-3h13c2 0 3 1 3 3v17M6 5h10v4H6z" />
              </Svg>
            </button>
            <i className="ml-3 h-[30px] w-px bg-[#d1d1d1]" />
            <button aria-label="音声入力" className="ml-[21px]">
              <Svg w={19} h={26} sw={1.8}>
                <rect x="5" y="1" width="9" height="16" rx="4.500" />
                <path d="M1 12c0 11 17 11 17 0M9.500 20v6" />
              </Svg>
            </button>
            <button aria-label="送信" disabled className="ml-[33px]">
              <Svg w={26} h={24} stroke="#bdbdbd">
                <path d="M1 1l24 11L1 23l3-11zM4 12h12" />
              </Svg>
            </button>
          </div>
        </div>
      </div>
    </aside>
  );
}

function StatusBar() {
  const [zoom, setZoom] = useState(50);
  return (
    <footer className="flex h-[34px] items-center border-t border-[#c6c6c6] bg-[#f5f5f5] pl-[13px] text-[18px] whitespace-nowrap text-[#333]">
      <span className="w-[100px]">準備完了</span>
      <Svg w={22} h={22}>
        <circle cx="9" cy="3" r="2.300" />
        <path d="M1 5c1 2 4 3 5 3v5l-3 8 2 .5 4-7 1 2M17 5c-1 2-4 3-5 3v4M11 12l9 9M20 12l-9 9" />
      </Svg>
      <button className="ml-[5px] text-[17px] font-bold">アクセシビリティ: 検討が必要です</button>
      <div className="ml-auto flex items-baseline gap-[22px]">
        <span>
          平均: <span className="text-[20px] leading-6">136220.2</span>
        </span>
        <span>
          データの個数: <span className="text-[20px] leading-6">404</span>
        </span>
        <span>
          合計: <span className="text-[20px] leading-6">27244040</span>
        </span>
      </div>
      <div className="ml-7 flex">
        <button aria-label="標準" className="flex h-[33px] w-[60px] items-center justify-center bg-[#e0e0e0]">
          <Svg w={21} h={20} stroke="#222">
            <path d="M1 1h19v18H1zM1 7h19M1 13h19M7.500 1v18M13.500 1v18" />
          </Svg>
        </button>
        <button aria-label="ページ レイアウト" className="flex h-[33px] w-[60px] items-center justify-center">
          <Svg w={21} h={20} stroke="#222">
            <path d="M1 1h19v18H1zM5 4h11v12H5zM7.500 7h6M7.500 10h6M7.500 13h6" />
          </Svg>
        </button>
        <button aria-label="改ページ プレビュー" className="flex h-[33px] w-[60px] items-center justify-center">
          <Svg w={21} h={20} stroke="#222">
            <path d="M1 1h19v18H1zM1 11h12V1M7 1v10" />
          </Svg>
        </button>
      </div>
      <button aria-label="縮小" className="ml-2">
        <Svg w={12} h={12} sw={1.4}>
          <path d="M0 6h12" />
        </Svg>
      </button>
      <input
        type="range"
        aria-label="ズーム"
        value={zoom}
        onChange={(e) => setZoom(Number(e.target.value))}
        className="mx-2 h-[2px] w-[149px] appearance-none bg-[#666] [&::-webkit-slider-thumb]:h-[17px] [&::-webkit-slider-thumb]:w-2 [&::-webkit-slider-thumb]:appearance-none [&::-webkit-slider-thumb]:bg-[#555]"
      />
      <button aria-label="拡大" className="mr-5">
        <Svg w={12} h={12} sw={1.4}>
          <path d="M0 6h12M6 0v12" />
        </Svg>
      </button>
      <span className="w-[61px] text-[19px]">100%</span>
    </footer>
  );
}

export default function App() {
  return (
    <div className="h-screen bg-white pt-[2px] pr-[3px] font-['Noto_Sans','Noto_Sans_CJK_JP',sans-serif] [font-feature-settings:'palt']">
      <div className="flex h-full flex-col bg-[linear-gradient(to_right,#e9ebdc,#e6ebe8_28%,#e8edf3_42%,#e9edf2_85%,#e7e9e3)]">
        <TitleBar />
        <TabRow />
        <Ribbon />
        <FormulaBar />
        <main className="flex min-h-0 flex-1 [font-feature-settings:normal]">
          <SheetArea />
          <CopilotPane />
        </main>
        <StatusBar />
        <div className="h-1 border-t-2 border-[#bcbca4] bg-[linear-gradient(to_right,#dfe3e0,#ecebb8_50%,#dde9ee_75%,#ecebb8)]" />
      </div>
    </div>
  );
}
